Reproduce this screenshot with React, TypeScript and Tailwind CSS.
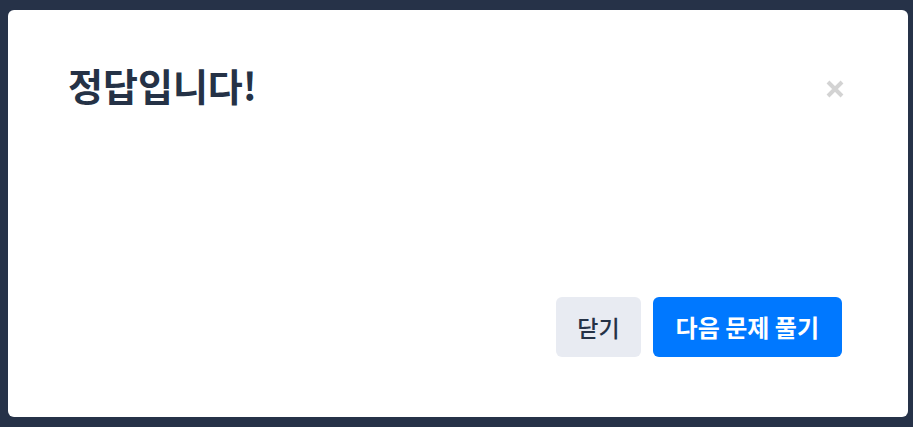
export default function App() {
  return (
    <div
      className="h-[427px] w-[913px] overflow-hidden bg-[#263248] pt-[10px] pl-[8px]"
      style={{ fontFamily: '"Noto Sans CJK KR", "Noto Sans", sans-serif' }}
    >
      {/* Modal */}
      <div className="flex h-[407px] w-[900px] flex-col rounded-[6px] bg-white pl-[60px] pr-[66px] pt-[52px] pb-[60px]">
        <div className="flex items-center justify-between">
          <h2 className="text-[38px] font-bold leading-[1.2] text-[#253246]">정답입니다!</h2>
          <button className="mr-[-3px] mt-[9px] text-[#d3d3d3]">
            <svg width="20" height="20" viewBox="0 0 20 20">
              <path d="M3 3 L17 17 M17 3 L3 17" stroke="currentColor" strokeWidth="4" strokeLinecap="butt" />
            </svg>
          </button>
        </div>

        <div className="flex-1" />

        {/* Actions */}
        <div className="flex justify-end gap-[12px]">
          <button className="h-[60px] rounded-[6px] bg-[#e8ebf2] px-[21px] text-[23px] font-medium text-[#253246]">
            닫기
          </button>
          <button className="h-[60px] rounded-[6px] bg-[#0078ff] px-[23px] text-[24px] font-bold text-white">
            다음 문제 풀기
          </button>
        </div>
      </div>
    </div>
  );
}
